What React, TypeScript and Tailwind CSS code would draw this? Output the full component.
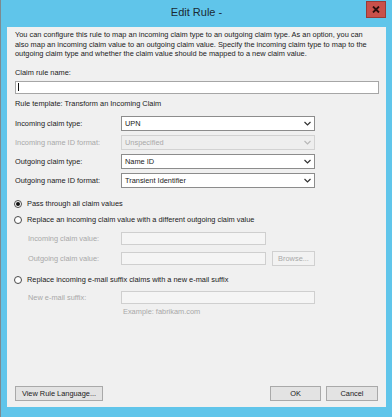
import React from "react";

const font = { fontFamily: '"Liberation Sans", Arial, sans-serif' };

function Chevron({ disabled }: { disabled?: boolean }) {
  return (
    <svg width="7" height="5" viewBox="0 0 7 5" className="shrink-0">
      <path d="M0.5 1 L3.5 4 L6.5 1" fill="none" stroke={disabled ? "#b8b8b8" : "#333"} strokeWidth="1.2" />
    </svg>
  );
}

function Select({ value, disabled }: { value: string; disabled?: boolean }) {
  return (
    <div
      className={
        "w-[194px] h-[15px] flex items-center justify-between pl-[3px] pr-[3px] border " +
        (disabled ? "bg-[#eeeeee] border-[#d2d2d2] text-[#a8a8a8]" : "bg-white border-[#8c8c8c] text-[#1a1a1a]")
      }
    >
      <span className="leading-none">{value}</span>
      <Chevron disabled={disabled} />
    </div>
  );
}

function Row({ label, value, disabled }: { label: string; value: string; disabled?: boolean }) {
  return (
    <div className="flex items-center h-[15px]">
      <span className={"w-[106px] leading-none " + (disabled ? "text-[#a8a8a8]" : "text-[#1a1a1a]")}>{label}</span>
      <Select value={value} disabled={disabled} />
    </div>
  );
}

function Radio({ checked, label }: { checked?: boolean; label: string }) {
  return (
    <div className="flex items-center h-[10px]">
      <span className="w-[8px] h-[8px] rounded-full border border-[#4a4a4a] bg-white flex items-center justify-center ml-[-1px]">
        {checked && <span className="w-[4px] h-[4px] rounded-full bg-[#111]" />}
      </span>
      <span className="ml-[5px] leading-none text-[#1a1a1a]">{label}</span>
    </div>
  );
}

function Btn({ label, w, dim }: { label: string; w: string; dim?: boolean }) {
  return (
    <div
      className={
        w +
        " h-[15px] flex items-center justify-center border " +
        (dim ? "bg-[#f2f2f2] border-[#d0d0d0] text-[#a8a8a8]" : "bg-[#e3e3e3] border-[#a9a9a9] text-[#1a1a1a]")
      }
    >
      <span className="leading-none">{label}</span>
    </div>
  );
}

export default function App() {
  return (
    <div className="w-[392px] h-[417px] bg-[#60c5ea] flex flex-col border-l border-[#7d8a90]" style={font}>
      <div className="h-[27px] grid grid-cols-[1fr_auto_1fr] items-start">
        <div />
        <div className="text-[11px] leading-none text-[#1b2a33] mt-[7px]">Edit Rule -</div>
        <div className="flex justify-end pr-[6px] pt-[1px]">
          <div className="w-[20px] h-[17px] bg-[#c9504a] border border-[#9a3b36] flex items-center justify-center">
            <svg width="8" height="7" viewBox="0 0 8 7">
              <path d="M1 0.5 L7 6.5 M7 0.5 L1 6.5" stroke="#2a0f0d" strokeWidth="1.8" />
            </svg>
          </div>
        </div>
      </div>
      <div className="mx-[6px] mb-[10px] flex-1 bg-[#f0f0f0] flex flex-col pl-[8px] pt-[3px] text-[7.4px] text-[#1a1a1a]">
        <p className="leading-[9.6px] whitespace-nowrap">
          You can configure this rule to map an incoming claim type to an outgoing claim type. As an option, you can
          <br />
          also map an incoming claim value to an outgoing claim value. Specify the incoming claim type to map to the
          <br />
          outgoing claim type and whether the claim value should be mapped to a new claim value.
        </p>
        <div className="mt-[9px] leading-[10px]">Claim rule name:</div>
        <div className="mt-[3px] w-[364px] h-[13px] bg-white border border-[#a6a6a6] flex items-center pl-[2px]">
          <span className="w-px h-[8px] bg-[#111]" />
        </div>
        <div className="mt-[5px] leading-[10px]">Rule template: Transform an Incoming Claim</div>
        <div className="mt-[7px] flex flex-col gap-[4px]">
          <Row label="Incoming claim type:" value="UPN" />
          <Row label="Incoming name ID format:" value="Unspecified" disabled />
          <Row label="Outgoing claim type:" value="Name ID" />
          <Row label="Outgoing name ID format:" value="Transient Identifier" />
        </div>
        <div className="mt-[11px]">
          <Radio checked label="Pass through all claim values" />
        </div>
        <div className="mt-[6px]">
          <Radio label="Replace an incoming claim value with a different outgoing claim value" />
        </div>
        <div className="mt-[7px] flex items-center h-[13px] text-[#a8a8a8]">
          <span className="w-[106px] pl-[13px] leading-none">Incoming claim value:</span>
          <div className="w-[145px] h-[13px] bg-[#f5f5f5] border border-[#cfcfcf]" />
        </div>
        <div className="mt-[6px] flex items-center h-[15px] text-[#a8a8a8]">
          <span className="w-[106px] pl-[13px] leading-none">Outgoing claim value:</span>
          <div className="w-[145px] h-[13px] bg-[#f5f5f5] border border-[#cfcfcf]" />
          <div className="ml-[6px]">
            <Btn label="Browse..." w="w-[43px]" dim />
          </div>
        </div>
        <div className="mt-[9px]">
          <Radio label="Replace incoming e-mail suffix claims with a new e-mail suffix" />
        </div>
        <div className="mt-[6px] flex items-center h-[13px] text-[#a8a8a8]">
          <span className="w-[106px] pl-[13px] leading-none">New e-mail suffix:</span>
          <div className="w-[194px] h-[13px] bg-[#f5f5f5] border border-[#cfcfcf]" />
        </div>
        <div className="mt-[3px] pl-[108px] leading-[10px] text-[#a8a8a8]">Example: fabrikam.com</div>
        <div className="mt-auto mb-[6px] flex items-center pr-[8px]">
          <Btn label="View Rule Language..." w="w-[88px]" />
          <div className="flex-1" />
          <Btn label="OK" w="w-[51px]" />
          <div className="w-[5px]" />
          <Btn label="Cancel" w="w-[52px]" />
        </div>
      </div>
    </div>
  );
}
